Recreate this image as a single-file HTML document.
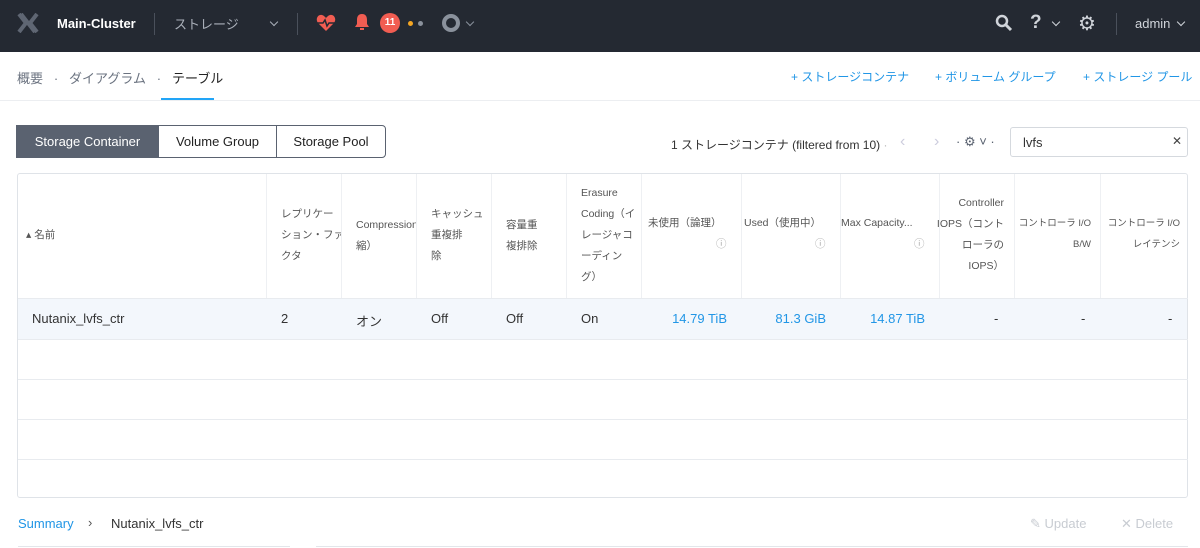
<html><head><style>
body{margin:0;width:1200px;height:548px;background:#fff;font-family:"Liberation Sans","Noto Sans CJK JP",sans-serif;position:relative;overflow:hidden;color:#333}
.a{position:absolute;white-space:nowrap}
.top{position:absolute;left:0;top:0;width:1200px;height:52px;background:#242932}
.sep{position:absolute;width:1px;height:22px;background:#4a505b;top:13px}
.btn{position:absolute;top:125px;height:33px;border:1px solid #5a6270;box-sizing:border-box;font-size:13px;line-height:31px;text-align:center;color:#222}
.vl{position:absolute;top:174px;width:1px;height:124px;background:#eef0f3}
.hl{position:absolute;left:18px;width:1170px;height:1px;background:#e8ebef}
.h{position:absolute;font-size:10.5px;color:#555;line-height:21px;white-space:nowrap;overflow:hidden}
.c{position:absolute;top:311px;font-size:13px;color:#333}
.b{color:#2196e6}
.chev{position:absolute;top:19px;width:5px;height:5px;border-right:1.5px solid;border-bottom:1.5px solid;transform:rotate(45deg)}
</style></head><body>
<div class="top"></div>
<svg class="a" style="left:17px;top:13px" width="22" height="20" viewBox="0 0 22 20"><path d="M2 1 L9 10 L2 19 M20 1 L13 10 L20 19 M4 1 L18 19" stroke="#5f6673" stroke-width="4" fill="none"/></svg>
<div class="a" style="left:57px;top:16px;color:#fff;font-size:13px;font-weight:bold">Main-Cluster</div>
<div class="sep" style="left:154px"></div>
<div class="a" style="left:174px;top:14px;color:#aab0ba;font-size:13px">ストレージ</div>
<div class="chev" style="left:271px;color:#aab0ba"></div>
<div class="sep" style="left:297px"></div>
<svg class="a" style="left:316px;top:14px" width="20" height="18" viewBox="0 0 20 18"><path d="M10 17 L2 9 C-1 5 2 0 6 1 C8 1.5 9 3 10 4 C11 3 12 1.5 14 1 C18 0 21 5 18 9Z" fill="#f15d52"/><path d="M1 9 H7 L9 6 L11 12 L13 9 H19" stroke="#242932" stroke-width="1.5" fill="none"/></svg>
<svg class="a" style="left:354px;top:13px" width="16" height="18" viewBox="0 0 16 18"><path d="M8 1 C4 1 3 4 3 7 V11 L1 14 H15 L13 11 V7 C13 4 12 1 8 1Z M6 15 H10 V17 H6Z" fill="#f15d52"/></svg>
<div class="a" style="left:380px;top:13px;width:20px;height:20px;border-radius:10px;background:#f15d52;color:#fff;font-size:10px;font-weight:bold;text-align:center;line-height:20px">11</div>
<div class="a" style="left:408px;top:21px;width:5px;height:5px;border-radius:3px;background:#f5a623"></div>
<div class="a" style="left:418px;top:21px;width:5px;height:5px;border-radius:3px;background:#8a919c"></div>
<div class="a" style="left:442px;top:14px;width:10px;height:10px;border:4px solid #8a919c;border-radius:50%"></div>
<div class="chev" style="left:467px;color:#8a919c"></div>
<svg class="a" style="left:995px;top:14px" width="18" height="18" viewBox="0 0 18 18"><circle cx="7" cy="7" r="5" stroke="#d0d4da" stroke-width="2.5" fill="none"/><path d="M11 11 L16 16" stroke="#d0d4da" stroke-width="3"/></svg>
<div class="a" style="left:1030px;top:12px;color:#d0d4da;font-size:19px;font-weight:bold">?</div>
<div class="chev" style="left:1053px;color:#d0d4da"></div>
<div class="a" style="left:1078px;top:11px;color:#d0d4da;font-size:20px">⚙</div>
<div class="sep" style="left:1116px"></div>
<div class="a" style="left:1135px;top:16px;color:#d0d4da;font-size:13px">admin</div>
<div class="chev" style="left:1178px;color:#d0d4da"></div>

<div class="a" style="left:17px;top:68px;font-size:13px;color:#6b7380">概要 &nbsp;&nbsp;·&nbsp;&nbsp; ダイアグラム &nbsp;&nbsp;·&nbsp;&nbsp; <span style="color:#222">テーブル</span></div>
<div class="a" style="left:161px;top:98px;width:53px;height:2px;background:#22a5f7"></div>
<div class="a" style="left:0;top:100px;width:1200px;height:1px;background:#eceef1"></div>
<div class="a b" style="left:791px;top:68px;font-size:12px">+ ストレージコンテナ</div>
<div class="a b" style="left:935px;top:68px;font-size:12px">+ ボリューム グループ</div>
<div class="a b" style="left:1083px;top:68px;font-size:12px">+ ストレージ プール</div>

<div class="btn" style="left:16px;width:143px;background:#5a6270;color:#fff">Storage Container</div>
<div class="btn" style="left:158px;width:119px">Volume Group</div>
<div class="btn" style="left:276px;width:110px;border-radius:0 4px 4px 0">Storage Pool</div>
<div class="a" style="left:671px;top:136px;font-size:12px">1 ストレージコンテナ (filtered from 10) <span style="color:#bbb">·</span></div>
<div class="a" style="left:900px;top:133px;font-size:16px;color:#ccd">‹</div>
<div class="a" style="left:934px;top:133px;font-size:16px;color:#ccd">›</div>
<div class="a" style="left:956px;top:134px;font-size:13px;color:#5a6270">· ⚙ ˅ ·</div>
<div class="a" style="left:1010px;top:127px;width:178px;height:30px;border:1px solid #d5d9de;border-radius:3px;box-sizing:border-box"></div>
<div class="a" style="left:1023px;top:135px;font-size:13px">lvfs</div>
<div class="a" style="left:1172px;top:134px;font-size:12px;color:#444">✕</div>

<div class="a" style="left:17px;top:173px;width:1171px;height:325px;border:1px solid #dfe3e8;border-radius:3px;box-sizing:border-box"></div>
<div class="a" style="left:18px;top:298px;width:1169px;height:41px;background:#f3f7fc"></div>
<div class="hl" style="top:298px"></div><div class="hl" style="top:339px"></div><div class="hl" style="top:379px"></div><div class="hl" style="top:419px"></div><div class="hl" style="top:459px"></div>
<div class="vl" style="left:266px"></div><div class="vl" style="left:341px"></div><div class="vl" style="left:416px"></div><div class="vl" style="left:491px"></div><div class="vl" style="left:566px"></div><div class="vl" style="left:641px"></div><div class="vl" style="left:741px"></div><div class="vl" style="left:840px"></div><div class="vl" style="left:939px"></div><div class="vl" style="left:1014px"></div><div class="vl" style="left:1100px"></div>
<div class="h" style="left:26px;top:225px">▴ 名前</div>
<div class="h" style="left:281px;top:204px;width:60px">レプリケー<br>ション・ファ<br>クタ</div>
<div class="h" style="left:356px;top:215px;width:60px">Compression<br>縮）</div>
<div class="h" style="left:431px;top:204px;width:60px">キャッシュ<br>重複排<br>除</div>
<div class="h" style="left:506px;top:215px;width:60px">容量重<br>複排除</div>
<div class="h" style="left:581px;top:183px;width:60px">Erasure<br>Coding（イ<br>レージャコ<br>ーディン<br>グ）</div>
<div class="h" style="left:648px;top:213px">未使用（論理）</div><div class="h" style="left:716px;top:234px;color:#aaa">ⓘ</div>
<div class="h" style="left:744px;top:213px">Used（使用中）</div><div class="h" style="left:815px;top:234px;color:#aaa">ⓘ</div>
<div class="h" style="left:841px;top:213px">Max Capacity...</div><div class="h" style="left:914px;top:234px;color:#aaa">ⓘ</div>
<div class="h" style="left:930px;top:193px;width:74px;text-align:right">Controller<br>IOPS（コント<br>ローラの<br>IOPS）</div>
<div class="h" style="left:1017px;top:213px;width:74px;text-align:right;font-size:9.5px">コントローラ I/O<br>B/W</div>
<div class="h" style="left:1102px;top:213px;width:78px;text-align:right;font-size:9.5px">コントローラ I/O<br>レイテンシ</div>
<div class="c" style="left:32px">Nutanix_lvfs_ctr</div>
<div class="c" style="left:281px">2</div>
<div class="c" style="left:356px">オン</div>
<div class="c" style="left:431px">Off</div>
<div class="c" style="left:506px">Off</div>
<div class="c" style="left:581px">On</div>
<div class="c b" style="left:641px;width:86px;text-align:right">14.79 TiB</div>
<div class="c b" style="left:741px;width:85px;text-align:right">81.3 GiB</div>
<div class="c b" style="left:840px;width:85px;text-align:right">14.87 TiB</div>
<div class="c" style="left:994px">-</div>
<div class="c" style="left:1081px">-</div>
<div class="c" style="left:1168px">-</div>

<div class="a b" style="left:18px;top:516px;font-size:13px">Summary</div>
<div class="a" style="left:88px;top:515px;font-size:13px;color:#555">›</div>
<div class="a" style="left:111px;top:516px;font-size:13px">Nutanix_lvfs_ctr</div>
<div class="a" style="left:1030px;top:516px;font-size:13px;color:#c8ccd2">✎ Update</div>
<div class="a" style="left:1121px;top:516px;font-size:13px;color:#c8ccd2">✕ Delete</div>
<div class="a" style="left:18px;top:546px;width:272px;height:1px;background:#e3e6ea"></div>
<div class="a" style="left:316px;top:546px;width:872px;height:1px;background:#e3e6ea"></div>
</body></html>
